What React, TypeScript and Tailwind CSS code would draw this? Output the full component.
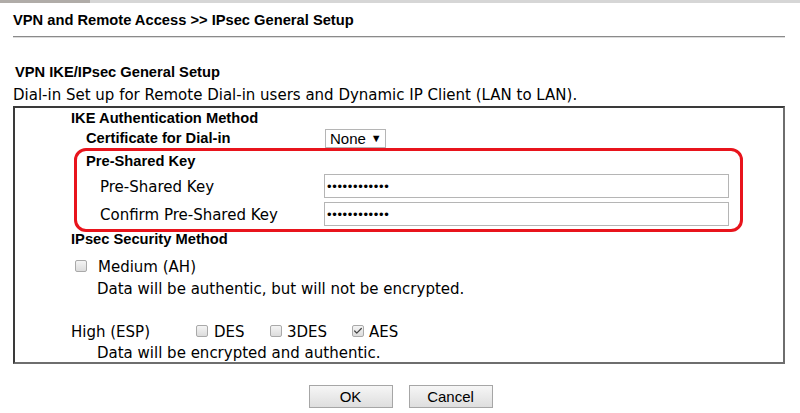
import { Check } from "lucide-react";

const arial = "font-['Liberation_Sans',Arial,sans-serif]";
const verdana = "font-['DejaVu_Sans',Verdana,sans-serif]";

function Box({ checked = false }: { checked?: boolean }) {
  return (
    <span className="inline-flex h-[12px] w-[12px] shrink-0 items-center justify-center rounded-[2px] border border-[#a9a9a9] bg-gradient-to-b from-[#f4f4f4] to-[#dcdcdc]">
      {checked && <Check className="h-[10px] w-[10px] text-[#444]" strokeWidth={3} />}
    </span>
  );
}

function Password() {
  return (
    <div className="flex h-[24px] w-[405px] items-center border border-[#b5b5b5] bg-white pl-[2px]">
      <span className={`${arial} text-[13px] leading-none tracking-[0.65px] text-black`}>••••••••••••</span>
    </div>
  );
}

export default function App() {
  return (
    <div className="h-[413px] w-[800px] overflow-hidden bg-white text-black">
      {/* top strip */}
      <div className="flex h-[3px]">
        <div className="w-[90px] bg-[#b0aca8]" />
        <div className="flex-1 bg-[#d6d6d6]" />
      </div>

      <div className="px-[13px]">
        <h1 className={`${arial} mt-[9px] text-[14.7px] font-bold leading-[17px]`}>
          VPN and Remote Access &gt;&gt; IPsec General Setup
        </h1>
        <div className="mt-[7px] h-[2px] w-[772px] border-t border-b border-t-[#8a8a8a] border-b-[#dcdcdc]" />

        <h2 className={`${arial} mt-[26px] pl-[2px] text-[14.7px] font-bold leading-[17px]`}>VPN IKE/IPsec General Setup</h2>
        <p className={`${verdana} mt-[5px] text-[15px] leading-[18px]`}>
          Dial-in Set up for Remote Dial-in users and Dynamic IP Client (LAN to LAN).
        </p>

        {/* settings box */}
        <div className="mt-[2px] h-[258px] w-[772px] border-2 border-t-[#3a3a3a] border-l-[#3a3a3a] border-r-[#6e6e6e] border-b-[#6e6e6e]">
          <div className={`${arial} flex h-[20px] items-center pl-[56px] text-[14.7px] font-bold`}>IKE Authentication Method</div>

          <div className="flex h-[20px] items-center">
            <span className={`${arial} w-[310px] pl-[71px] text-[14.7px] font-bold`}>Certificate for Dial-in</span>
            <div className={`${arial} flex h-[19px] w-[61px] items-center gap-[5px] border border-[#b5b5b5] px-[4px] text-[15px] leading-none`}>
              None <span className="text-[11px]">▼</span>
            </div>
          </div>

          <div className="ml-[59px] mr-[40px] h-[84px] rounded-[12px] border-[3px] border-[#e8141c]">
            <div className={`${arial} flex h-[20px] items-center pl-[9px] text-[14.7px] font-bold`}>Pre-Shared Key</div>
            <div className="mt-[1px] flex h-[28px] items-center">
              <span className={`${verdana} w-[247px] pl-[23px] pt-[3px] text-[15px]`}>Pre-Shared Key</span>
              <Password />
            </div>
            <div className="flex h-[28px] items-center">
              <span className={`${verdana} w-[247px] pl-[23px] pt-[3px] text-[15px]`}>Confirm Pre-Shared Key</span>
              <Password />
            </div>
          </div>

          <div className={`${arial} -mt-[1px] flex h-[16px] items-center pl-[56px] text-[14.7px] font-bold`}>IPsec Security Method</div>

          <div className={`${verdana} mt-[7px] flex h-[24px] items-center pl-[60px] text-[15px]`}>
            <Box />
            <span className="ml-[11px] pt-[2px]">Medium (AH)</span>
          </div>
          <div className={`${verdana} mt-[1px] flex h-[20px] items-center pl-[82px] text-[15px]`}>
            Data will be authentic, but will not be encrypted.
          </div>

          <div className={`${verdana} mt-[22px] flex h-[20px] items-center pl-[56px] text-[15px]`}>
            <span className="w-[125px] pt-[2px]">High (ESP)</span>
            <Box />
            <span className="ml-[6px] w-[56px] pt-[2px]">DES</span>
            <Box />
            <span className="ml-[5px] w-[65px] pt-[2px]">3DES</span>
            <Box checked />
            <span className="ml-[5px] pt-[2px]">AES</span>
          </div>
          <div className={`${verdana} mt-[2px] flex h-[20px] items-center pl-[82px] text-[15px]`}>
            Data will be encrypted and authentic.
          </div>
        </div>
      </div>

      <div className="mt-[21px] flex justify-center gap-[16px] pl-[1px]">
        {["OK", "Cancel"].map((b) => (
          <button
            key={b}
            className={`${arial} h-[23px] w-[84px] border border-[#a6a6a6] bg-gradient-to-b from-[#f6f6f6] to-[#dedede] text-[15px] leading-none`}
          >
            {b}
          </button>
        ))}
      </div>
    </div>
  );
}
